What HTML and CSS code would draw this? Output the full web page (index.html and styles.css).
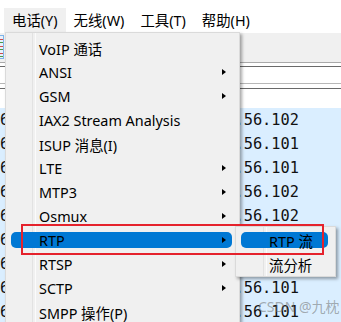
FILE: index.html
```html
<!DOCTYPE html>
<html lang="zh-CN">
<head>
  <meta charset="UTF-8" />
  <title>Wireshark - 电话菜单</title>
  <link rel="stylesheet" href="styles.css">
</head>
<body>
  <div class="app">
    <div class="menubar">
      <span class="mb-item active">电话(Y)</span>
      <span class="mb-item">无线(W)</span>
      <span class="mb-item">工具(T)</span>
      <span class="mb-item">帮助(H)</span>
    </div>

    <div class="toolbar"><span class="tb-btn"></span></div>
    <div class="filter"><div class="filter-box"></div></div>
    <div class="list-head"></div>

    <div class="rows">
      <div class="row"><span class="c-no">6</span><span class="c-src">192.168.56.102</span></div>
      <div class="row"><span class="c-no">6</span><span class="c-src">192.168.56.101</span></div>
      <div class="row"><span class="c-no">6</span><span class="c-src">192.168.56.101</span></div>
      <div class="row"><span class="c-no">6</span><span class="c-src">192.168.56.102</span></div>
      <div class="row"><span class="c-no">6</span><span class="c-src">192.168.56.102</span></div>
      <div class="row"><span class="c-no">6</span></div>
      <div class="row"><span class="c-no">6</span></div>
      <div class="row"><span class="c-no">6</span><span class="c-src">192.168.56.101</span></div>
      <div class="row"><span class="c-no">6</span><span class="c-src">192.168.56.101</span></div>
    </div>

    <!-- 电话 下拉菜单 -->
    <div class="menu">
      <div class="item">VoIP 通话</div>
      <div class="item">ANSI<i class="arrow"></i></div>
      <div class="item">GSM<i class="arrow"></i></div>
      <div class="item">IAX2 Stream Analysis</div>
      <div class="item">ISUP 消息(I)</div>
      <div class="item">LTE<i class="arrow"></i></div>
      <div class="item">MTP3<i class="arrow"></i></div>
      <div class="item">Osmux<i class="arrow"></i></div>
      <div class="item hl">RTP<i class="arrow"></i></div>
      <div class="item">RTSP<i class="arrow"></i></div>
      <div class="item">SCTP<i class="arrow"></i></div>
      <div class="item">SMPP 操作(P)</div>
    </div>

    <!-- RTP 子菜单 -->
    <div class="submenu">
      <div class="item hl">RTP 流</div>
      <div class="item">流分析</div>
    </div>

    <div class="mark"></div>
    <div class="watermark">CSDN @九枕</div>
  </div>
</body>
</html>
```

FILE: styles.css
```css
* { box-sizing: border-box; }

body {
  margin: 0;
  background: #fff;
  font-family: 'Noto Sans', 'Noto Sans CJK SC', sans-serif;
  font-size: 14.4px;
  color: #000;
}

.app {
  position: relative;
  width: 341px;
  height: 322px;
  overflow: hidden;
}

/* menu bar */
.menubar {
  display: flex;
  height: 33px;
  padding: 8px 0 0 4px;
}

.mb-item {
  height: 25px;
  line-height: 25px;
  padding: 0 8px;
}

.mb-item.active {
  background: #f0f0f0;
}

/* toolbar + filter */
.toolbar {
  height: 30px;
  background: #f0f0f0;
  border-bottom: 1px solid #a9a9a9;
  padding-top: 2px;
}

.tb-btn {
  display: block;
  width: 4px;
  height: 24px;
  border: 1px solid #7fb4ea;
  border-left: none;
  background: repeating-linear-gradient(#e8f2fc 0 3px, #d04a4a 3px 4px, #e8f2fc 4px 6px, #4a9a4a 6px 7px);
}

.filter {
  height: 25px;
  padding-top: 3px;
}

.filter-box {
  height: 18px;
  border-top: 1px solid #6a6a6a;
  border-bottom: 1px solid #b8b8b8;
}

.list-head {
  height: 20px;
  border-top: 1px solid #6a6a6a;
}

/* packet list */
.rows {
  font-family: 'DejaVu Sans Mono', monospace;
  font-size: 15.3px;
  color: #111;
}

.row {
  display: flex;
  height: 24px;
  line-height: 24px;
  background: #daeeff;
}

.c-no {
  width: 170px;
}

/* popup menus */
.menu,
.submenu {
  position: absolute;
  background: #f0f0f0;
  border: 1px solid #dadada;
  box-shadow: 2px 2px 3px rgba(0, 0, 0, 0.35);
}

.menu {
  left: 5px;
  top: 32px;
  width: 235px;
  padding-top: 3px;
}

.submenu {
  left: 235px;
  top: 226px;
  width: 101px;
  height: 51px;
  padding-top: 1px;
}

.menu::before,
.submenu::before {
  content: "";
  position: absolute;
  top: 0;
  bottom: 0;
  width: 2px;
  border-left: 1px solid #e2e2e2;
  border-right: 1px solid #fbfbfb;
}

.menu::before { left: 26px; }
.submenu::before { left: 27px; }

.item {
  position: relative;
  z-index: 0;
  display: flex;
  align-items: center;
  height: 24px;
  padding: 0 13px 0 33px;
}

.item.hl::before {
  content: "";
  position: absolute;
  z-index: -1;
  top: 4px;
  bottom: 4px;
  left: 5px;
  right: 7px;
  background: #0078d4;
  border-radius: 5px;
}

.arrow {
  margin-left: auto;
  width: 0;
  height: 0;
  border-left: 4px solid #000;
  border-top: 3.5px solid transparent;
  border-bottom: 3.5px solid transparent;
}

/* annotation */
.mark {
  position: absolute;
  left: 21px;
  top: 224px;
  width: 303px;
  height: 31px;
  border: 2px solid #e5222c;
}

.watermark {
  position: absolute;
  left: 258px;
  top: 296px;
  font-size: 14px;
  color: rgba(110, 110, 110, 0.55);
}
```
